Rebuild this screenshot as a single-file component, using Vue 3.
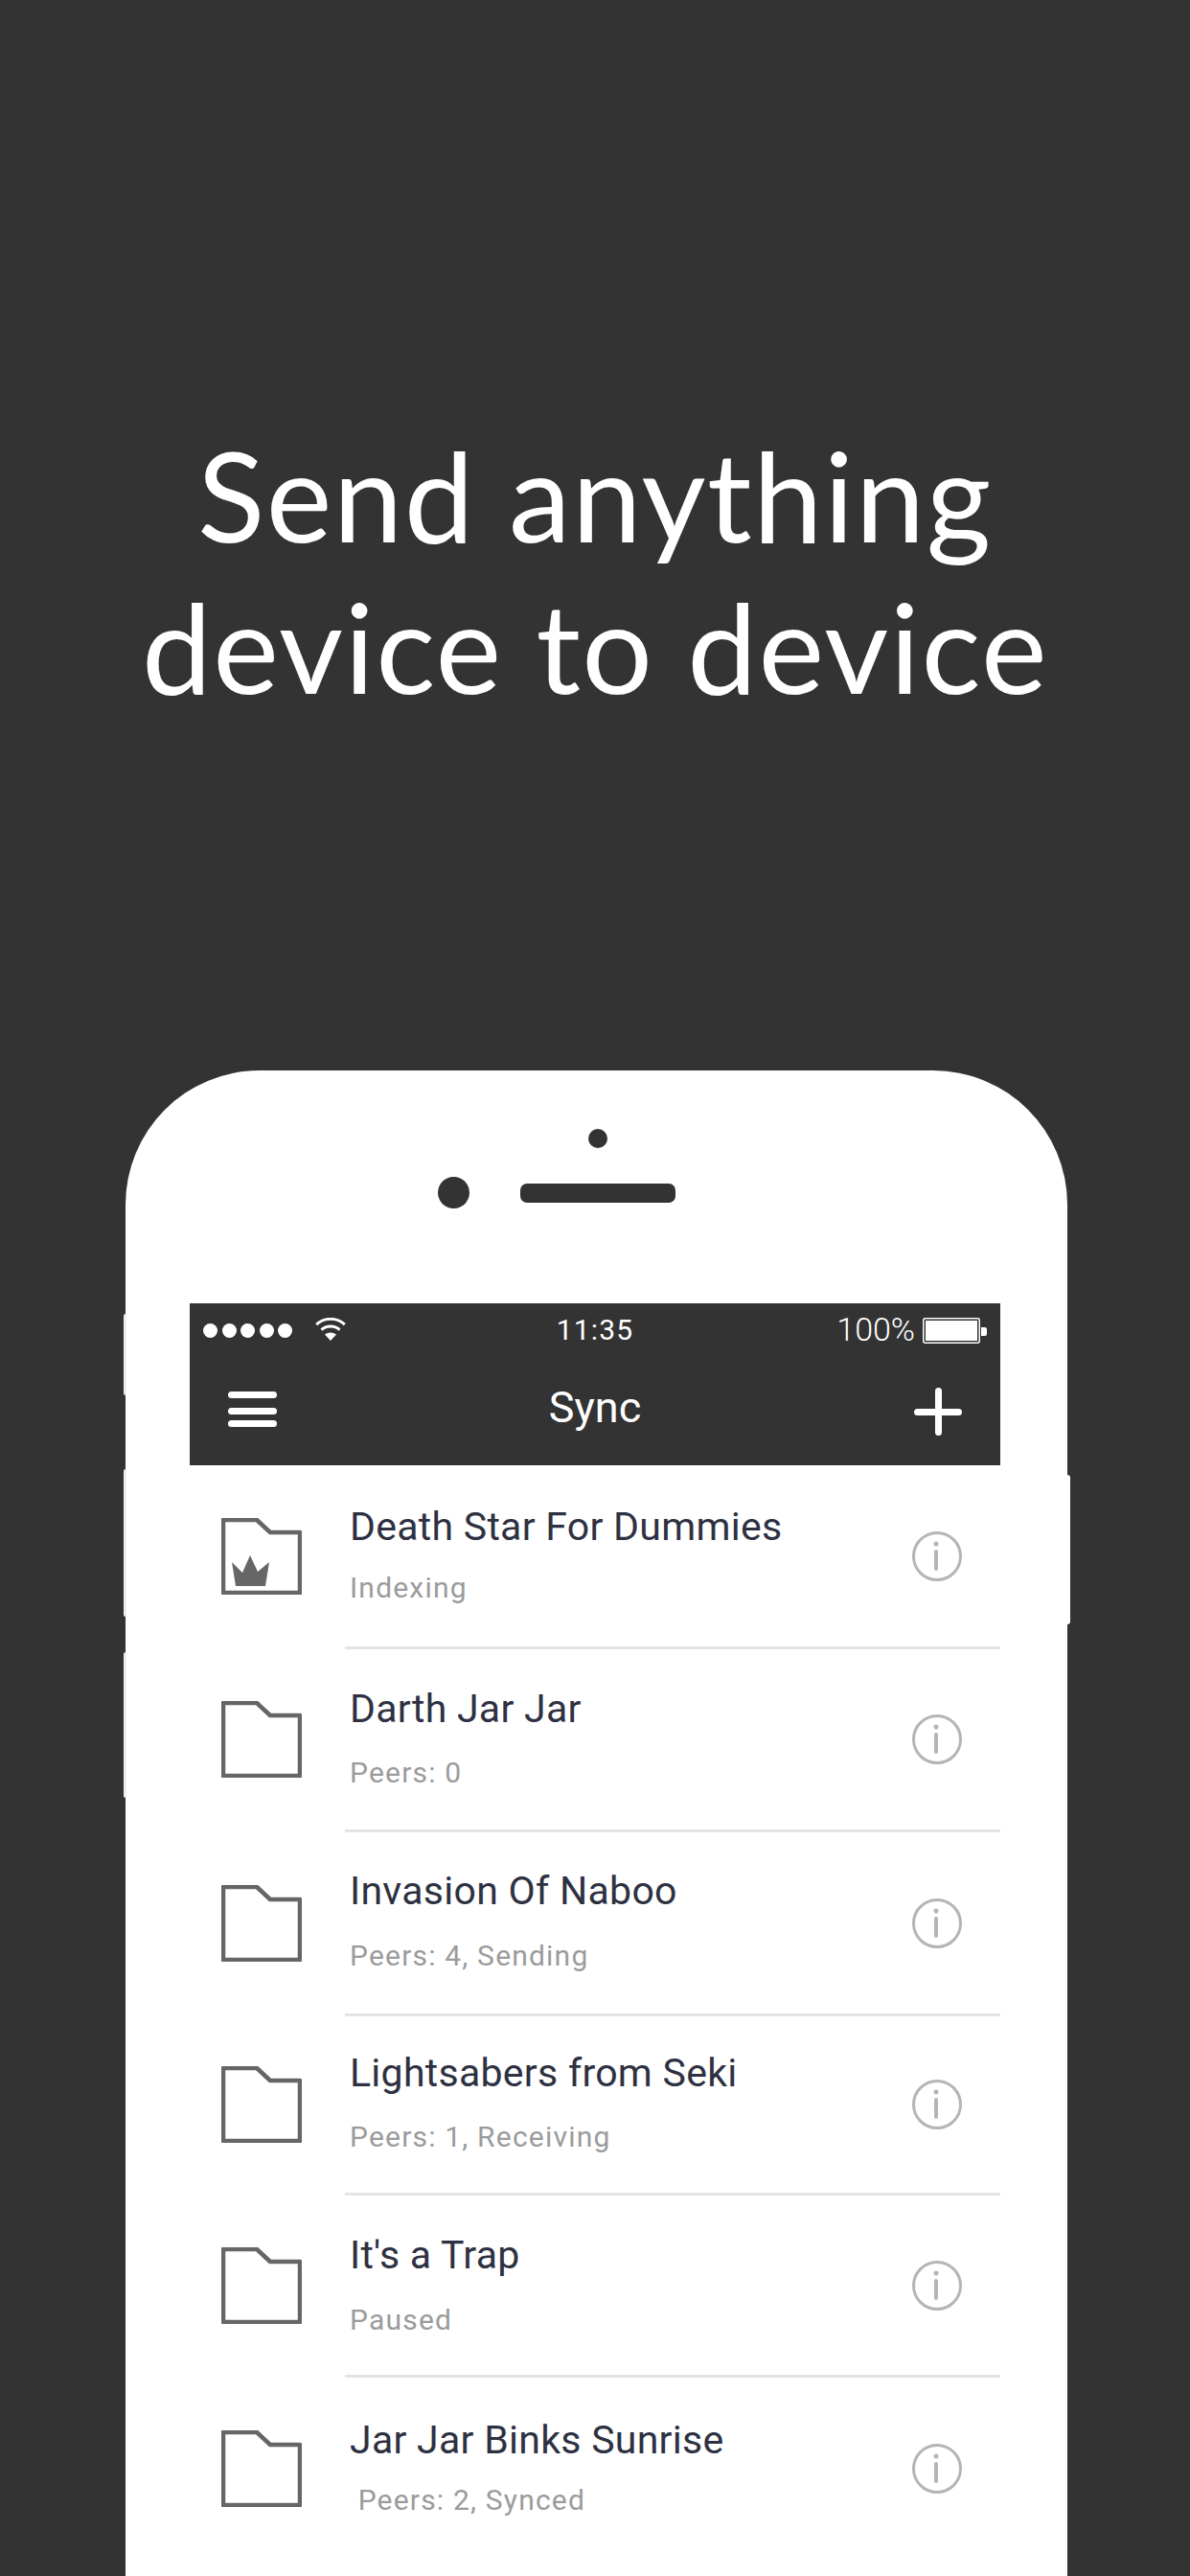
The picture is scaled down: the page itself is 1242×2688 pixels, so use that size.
<template>
  <div class="page">
    <h1 class="headline">Send anything<br />device to device</h1>

    <div class="phone">
      <span class="side-btn left mute"></span>
      <span class="side-btn left vol-up"></span>
      <span class="side-btn left vol-down"></span>
      <span class="side-btn right power"></span>

      <div class="sensors">
        <span class="front-dot"></span>
        <div class="ear-row">
          <span class="camera"></span>
          <span class="speaker"></span>
        </div>
      </div>

      <div class="screen">
        <header class="app-header">
          <div class="status-bar">
            <div class="status-left">
              <span class="signal">
                <i v-for="n in 5" :key="n"></i>
              </span>
              <svg class="wifi" width="32" height="24" viewBox="0 0 32 24">
                <path d="M1.2 7.2C9.5-.6 22.500-.6 30.800 7.200" fill="none" stroke="#fff" stroke-width="3" />
                <path d="M6.500 12.600C11.800 7.800 20.200 7.800 25.500 12.600" fill="none" stroke="#fff" stroke-width="3" />
                <path d="M10 17.400C13.400 14.700 18.600 14.700 22 17.400L16 24Z" fill="#fff" />
              </svg>
            </div>
            <span class="time">11:35</span>
            <div class="status-right">
              <span class="percent">100%</span>
              <svg class="battery" width="67" height="27" viewBox="0 0 67 27">
                <rect x="0.750" y="0.750" width="58.500" height="25.500" rx="2" fill="none" stroke="#fff" stroke-width="1.500" />
                <rect x="3" y="3" width="54" height="21" fill="#fff" />
                <path d="M61 10H65A2 2 0 0 1 67 12V17A2 2 0 0 1 65 19H61Z" fill="#fff" />
              </svg>
            </div>
          </div>
          <nav class="nav-bar">
            <div class="burger"><i></i><i></i><i></i></div>
            <span class="nav-title">Sync</span>
            <svg class="plus" width="50" height="50" viewBox="0 0 50 50">
              <rect x="22" y="0" width="7" height="50" rx="3.500" fill="#fff" />
              <rect x="0" y="22" width="50" height="7" rx="3.500" fill="#fff" />
            </svg>
          </nav>
        </header>

        <ul class="folder-list">
          <li v-for="folder in folders" :key="folder.name" class="row">
            <svg class="folder" width="84" height="80" viewBox="0 0 84 80">
              <path d="M2 2H37L51 15H82V78H2Z" fill="none" stroke="#666" stroke-width="4.500" stroke-linejoin="round" />
              <path v-if="folder.owned" d="M11 46L22 57L30 39L38 56L50 46L46 71H15Z" fill="#666" />
            </svg>
            <div class="row-body">
              <div class="row-text">
                <div class="name">{{ folder.name }}</div>
                <div class="status">{{ folder.status }}</div>
              </div>
              <svg class="info" width="52" height="52" viewBox="0 0 52 52">
                <circle cx="26" cy="26" r="24.500" fill="none" stroke="#b5b5b5" stroke-width="3" />
                <circle cx="25" cy="13" r="2.500" fill="#b5b5b5" />
                <rect x="23" y="19" width="4" height="22" rx="2" fill="#b5b5b5" />
              </svg>
            </div>
          </li>
        </ul>
      </div>
    </div>
  </div>
</template>

<script setup>
const folders = [
  { name: 'Death Star For Dummies', status: 'Indexing', owned: true },
  { name: 'Darth Jar Jar', status: 'Peers: 0' },
  { name: 'Invasion Of Naboo', status: 'Peers: 4, Sending' },
  { name: 'Lightsabers from Seki', status: 'Peers: 1, Receiving' },
  { name: "It's a Trap", status: 'Paused' },
  { name: 'Jar Jar Binks Sunrise', status: '\u00a0Peers: 2, Synced' }
]
</script>

<style>
html,
body {
  margin: 0;
  background: #333;
}
</style>

<style scoped>
.page {
  width: 1242px;
  height: 2688px;
  overflow: hidden;
  background: #333;
  padding-top: 437px;
  box-sizing: border-box;
}

.headline {
  margin: 0;
  color: #fff;
  font-family: Lato, "Open Sans", sans-serif;
  font-size: 130px;
  font-weight: 400;
  line-height: 158px;
  letter-spacing: 1.500px;
  text-align: center;
}

.phone {
  position: relative;
  width: 983px;
  height: 1700px;
  margin: 364px 0 0 131px;
  background: #fff;
  border-radius: 140px 140px 0 0;
}

.side-btn {
  position: absolute;
  width: 3px;
  background: #eee;
}
.side-btn.left {
  left: -2px;
  border-radius: 2px 0 0 2px;
}
.side-btn.right {
  right: -3px;
  background: #fff;
  border-radius: 0 4px 4px 0;
}
.mute { top: 254px; height: 85px; }
.vol-up { top: 416px; height: 154px; }
.vol-down { top: 607px; height: 152px; }
.power { top: 422px; height: 156px; }

.sensors {
  height: 243px;
  padding-top: 61px;
  box-sizing: border-box;
}
.front-dot {
  display: block;
  width: 20px;
  height: 20px;
  margin-left: 483px;
  border-radius: 50%;
  background: #333;
}
.ear-row {
  display: flex;
  align-items: center;
  margin: 30px 0 0 326px;
}
.camera {
  width: 33px;
  height: 33px;
  border-radius: 50%;
  background: #333;
}
.speaker {
  width: 162px;
  height: 20px;
  margin-left: 53px;
  border-radius: 7px;
  background: #333;
}

.screen {
  width: 846px;
  margin-left: 67px;
}

.app-header {
  height: 169px;
  background: #333;
  color: #fff;
  font-family: Roboto, "Liberation Sans", sans-serif;
}

.status-bar {
  display: grid;
  grid-template-columns: 1fr auto 1fr;
  align-items: center;
  height: 56px;
}
.status-left {
  display: flex;
  align-items: center;
  padding-left: 14px;
}
.signal {
  display: flex;
  gap: 4.500px;
}
.signal i {
  width: 15px;
  height: 15px;
  border-radius: 50%;
  background: #fff;
}
.wifi {
  margin: 0 0 2px 24px;
}
.time {
  margin-bottom: 2px;
  font-size: 30px;
  font-weight: 400;
  letter-spacing: 1.200px;
}
.status-right {
  display: flex;
  align-items: center;
  justify-content: flex-end;
  padding-right: 14px;
}
.percent {
  margin: 0 8px 2px 0;
  font-size: 34px;
  font-weight: 300;
}

.nav-bar {
  display: grid;
  grid-template-columns: 1fr auto 1fr;
  align-items: center;
  height: 113px;
}
.burger {
  width: 51px;
  margin: 0 0 4px 40px;
}
.burger i {
  display: block;
  height: 7px;
  border-radius: 4px;
  background: #fff;
}
.burger i + i {
  margin-top: 10px;
}
.burger i:last-child {
  margin-top: 6px;
}
.nav-title {
  font-size: 45px;
  font-weight: 400;
  margin-bottom: 8px;
}
.plus {
  justify-self: end;
  margin-right: 40px;
}

.folder-list {
  margin: 0;
  padding: 0;
  list-style: none;
  font-family: Roboto, "Liberation Sans", sans-serif;
}

.row {
  display: flex;
  padding-left: 33px;
}
.row:nth-child(1) { height: 192px; --name-top: 40px; --status-gap: 22px; }
.row:nth-child(2) { height: 191px; --name-top: 38px; --status-gap: 25px; }
.row:nth-child(3) { height: 192px; --name-top: 37px; --status-gap: 26px; }
.row:nth-child(4) { height: 187px; --name-top: 35px; --status-gap: 25px; }
.row:nth-child(5) { height: 190px; --name-top: 38px; --status-gap: 26px; }
.row:nth-child(6) { height: 193px; --name-top: 41px; --status-gap: 21px; }

.folder {
  align-self: center;
  flex: none;
  margin-bottom: 3px;
}

.row-body {
  display: flex;
  flex: 1;
  align-items: center;
  justify-content: space-between;
  margin-left: 45px;
  padding-right: 40px;
  border-bottom: 3px solid #e3e3e3;
}
.row:last-child .row-body {
  border-bottom-color: transparent;
}

.row-text {
  align-self: flex-start;
  padding-top: var(--name-top);
  padding-left: 5px;
}
.name {
  color: #2e3142;
  font-size: 41px;
  line-height: 48px;
  letter-spacing: 0.280px;
}
.status {
  margin-top: var(--status-gap);
  color: #9b9b9b;
  font-size: 30px;
  line-height: 36px;
  letter-spacing: 1.200px;
}
</style>
